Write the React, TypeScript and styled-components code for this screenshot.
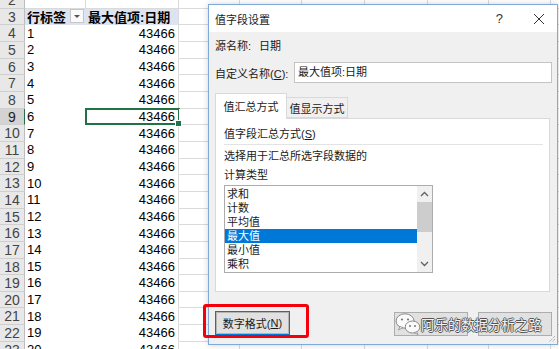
import React from "react";
import styled, { createGlobalStyle } from "styled-components";

const GlobalStyle = createGlobalStyle`
  html, body {
    margin: 0;
    padding: 0;
    background: #fff;
  }
  body {
    font-family: "Liberation Sans", "Noto Sans CJK SC", sans-serif;
  }
  * {
    box-sizing: border-box;
  }
`;

const ROW_H = 50 / 3;
const EXTRA_COLS = [61, 62, 63, 63, 61, 62, 62];
const GRID = "#dadada";
const UI_FONT = `"Liberation Sans", "Noto Sans CJK SC", sans-serif`;

const Page = styled.div`
  position: relative;
  width: 559px;
  height: 349px;
  overflow: hidden;
`;

const Sheet = styled.div`
  margin-top: -8px;
  display: flex;
  flex-direction: column;
`;

const Row = styled.div`
  display: flex;
  height: ${ROW_H}px;
  flex: none;
`;

const RowHead = styled.div<{ $active?: boolean }>`
  width: 25px;
  flex: none;
  background: ${(p) => (p.$active ? "#d3d3d3" : "#e8e8e8")};
  border-right: 1px solid ${(p) => (p.$active ? "#217346" : "#bdbdbd")};
  border-bottom: 1px solid #cfcfcf;
  color: ${(p) => (p.$active ? "#1e1e1e" : "#444")};
  font-size: 14px;
  line-height: ${ROW_H}px;
  text-align: center;
`;

const Cell = styled.div<{
  $w: number;
  $right?: boolean;
  $bold?: boolean;
  $bg?: string;
  $gridRight?: boolean;
  $gridBottom?: boolean;
  $selected?: boolean;
}>`
  position: relative;
  width: ${(p) => p.$w}px;
  flex: none;
  display: flex;
  align-items: center;
  justify-content: ${(p) => (p.$right ? "flex-end" : "space-between")};
  padding: 0 3px 0 2px;
  background: ${(p) => p.$bg || "#fff"};
  border-right: 1px solid ${(p) => (p.$gridRight ? GRID : "transparent")};
  border-bottom: 1px solid ${(p) => (p.$gridBottom ? GRID : "transparent")};
  font-size: 13px;
  font-weight: ${(p) => (p.$bold ? 700 : 400)};
  color: #000;
  white-space: nowrap;
  ${(p) =>
    p.$selected &&
    `
    &::after {
      content: "";
      position: absolute;
      left: -1px;
      top: -1px;
      right: -2px;
      bottom: -1px;
      border: 2px solid #217346;
    }
    &::before {
      content: "";
      position: absolute;
      right: -4px;
      bottom: -3px;
      width: 5px;
      height: 5px;
      background: #217346;
      border: 1px solid #fff;
      z-index: 1;
    }
  `}
`;

const FilterButton = styled.span`
  width: 14px;
  height: 14px;
  margin-right: -2px;
  border: 1px solid #c6c6c6;
  background: #fafafa;
  display: flex;
  align-items: center;
  justify-content: center;
  &::after {
    content: "";
    border-left: 3px solid transparent;
    border-right: 3px solid transparent;
    border-top: 3px solid #555;
  }
`;

/* ---------- dialog ---------- */

const Dialog = styled.div`
  position: absolute;
  left: 208px;
  top: 4px;
  width: 350px;
  height: 341px;
  background: #f0f0f0;
  border: 1px solid #7fa9d8;
  box-shadow: 0 0 6px rgba(0, 0, 0, 0.18);
  display: flex;
  flex-direction: column;
  font-family: ${UI_FONT};
  font-size: 11px;
  color: #1a1a1a;
`;

const TitleBar = styled.div`
  height: 27px;
  flex: none;
  background: #fff;
  display: flex;
  align-items: center;
  padding: 0 12px 0 6px;
  font-size: 11px;
`;

const Title = styled.span`
  flex: 1;
`;

const HelpGlyph = styled.span`
  font-size: 13px;
  color: #333;
  margin-right: 30px;
`;

const Body = styled.div`
  flex: 1;
  display: flex;
  flex-direction: column;
  padding: 7px 5px 0 6px;
`;

const InfoLine = styled.div`
  display: flex;
  height: 14px;
  line-height: 14px;
`;

const Label = styled.span<{ $w: number }>`
  width: ${(p) => p.$w}px;
  flex: none;
`;

const FieldRow = styled.div`
  display: flex;
  align-items: center;
  margin-top: 9px;
  height: 21px;
`;

const TextInput = styled.div`
  flex: 1;
  height: 21px;
  background: #fff;
  border: 1px solid #c4c4c4;
  padding: 0 3px;
  line-height: 19px;
`;

const TabStrip = styled.div`
  display: flex;
  align-items: flex-end;
  margin-top: 10px;
  height: 25px;
  margin-right: 2px;
  position: relative;
  z-index: 1;
`;

const Tab = styled.div<{ $active?: boolean; $w: number }>`
  width: ${(p) => p.$w}px;
  height: ${(p) => (p.$active ? 26 : 21)}px;
  margin-bottom: ${(p) => (p.$active ? -1 : 0)}px;
  background: ${(p) => (p.$active ? "#fff" : "#f0f0f0")};
  border: 1px solid #d9d9d9;
  border-bottom: ${(p) => (p.$active ? "none" : "1px solid #d9d9d9")};
  border-left: ${(p) => (p.$active ? "1px solid #d9d9d9" : "none")};
  display: flex;
  align-items: center;
  justify-content: center;
  padding-bottom: ${(p) => (p.$active ? 1 : 0)}px;
`;

const Panel = styled.div`
  height: 174px;
  margin-right: 2px;
  background: #fff;
  border: 1px solid #d9d9d9;
  padding: 8px 6px 0 8px;
  display: flex;
  flex-direction: column;
`;

const SectionTitle = styled.div`
  height: 14px;
  line-height: 14px;
`;

const Separator = styled.div`
  height: 1px;
  background: #e3e3e3;
  margin-top: 3px;
`;

const Desc = styled.div`
  margin-top: 2px;
  line-height: 19px;
`;

const ListBox = styled.div`
  width: 209px;
  height: 88px;
  border: 1px solid #acacac;
  display: flex;
  background: #fff;
`;

const Items = styled.div`
  flex: 1;
  padding-top: 1px;
  display: flex;
  flex-direction: column;
`;

const Item = styled.div<{ $selected?: boolean }>`
  height: 14px;
  line-height: 14px;
  padding-left: 2px;
  background: ${(p) => (p.$selected ? "#0078d7" : "transparent")};
  color: ${(p) => (p.$selected ? "#fff" : "#1a1a1a")};
`;

const ScrollBar = styled.div`
  width: 15px;
  flex: none;
  background: #f0f0f0;
  display: flex;
  flex-direction: column;
  align-items: center;
`;

const ScrollArrow = styled.div`
  height: 16px;
  width: 15px;
  flex: none;
  display: flex;
  align-items: center;
  justify-content: center;
`;

const Thumb = styled.div`
  width: 15px;
  height: 30px;
  background: #cdcdcd;
`;

const Track = styled.div`
  flex: 1;
`;

const Footer = styled.div`
  display: flex;
  margin-top: 19px;
  height: 24px;
  gap: 10px;
`;

const Button = styled.div<{ $focused?: boolean }>`
  width: ${(p) => (p.$focused ? 75 : 74)}px;
  height: 24px;
  background: #e1e1e1;
  border: 1px solid ${(p) => (p.$focused ? "#0078d7" : "#adadad")};
  box-shadow: ${(p) => (p.$focused ? "inset 0 0 0 1px #b4b4b4" : "none")};
  display: flex;
  align-items: center;
  justify-content: center;
  margin-top: ${(p) => (p.$focused ? 0 : 1)}px;
`;

const Spacer = styled.div`
  flex: 1;
`;

const Grip = styled.svg`
  position: absolute;
  right: 1px;
  bottom: 1px;
`;

/* ---------- overlays ---------- */

const RedMark = styled.div`
  position: absolute;
  left: 203px;
  top: 304px;
  width: 106px;
  height: 34px;
  border: 3px solid #f5000a;
  border-radius: 3px;
`;

const Watermark = styled.div`
  position: absolute;
  left: 395px;
  top: 313px;
  display: flex;
  align-items: center;
  font-family: "Noto Sans CJK SC", sans-serif;
  font-size: 13.5px;
  color: #f2f2f2;
  text-shadow: 1px 0 0 #555, -1px 0 0 #555, 0 1px 0 #555, 0 -1px 0 #555;
  letter-spacing: -0.1px;
`;

const WeChat = () => (
  <svg width="26" height="22" viewBox="0 0 26 22">
    <ellipse cx="10" cy="8" rx="9" ry="7.2" fill="#fafafa" stroke="#8a8a8a" strokeWidth="1" />
    <path d="M5 13.5 L3.5 17 L8 14.6 Z" fill="#fafafa" stroke="#8a8a8a" strokeWidth="0.8" />
    <circle cx="7" cy="6.5" r="1.1" fill="#777" />
    <circle cx="13" cy="6.5" r="1.1" fill="#777" />
    <ellipse cx="17.5" cy="14" rx="7.3" ry="6" fill="#fafafa" stroke="#8a8a8a" strokeWidth="1" />
    <path d="M21.5 18.8 L23 21.5 L19 19.7 Z" fill="#fafafa" stroke="#8a8a8a" strokeWidth="0.8" />
    <circle cx="15" cy="13" r="1" fill="#777" />
    <circle cx="20" cy="13" r="1" fill="#777" />
  </svg>
);

const Chevron = ({ up }: { up?: boolean }) => (
  <svg width="9" height="6" viewBox="0 0 9 6">
    <path
      d={up ? "M1 5 L4.5 1.5 L8 5" : "M1 1 L4.5 4.5 L8 1"}
      fill="none"
      stroke="#606060"
      strokeWidth="1.3"
    />
  </svg>
);

const CloseIcon = () => (
  <svg width="12" height="12" viewBox="0 0 12 12">
    <path d="M1 1 L11 11 M11 1 L1 11" stroke="#333" strokeWidth="1" />
  </svg>
);

const methods = ["求和", "计数", "平均值", "最大值", "最小值", "乘积"];

export default function App() {
  const rows = Array.from({ length: 22 }, (_, i) => i + 2);

  const extras = (rowNo: number) =>
    EXTRA_COLS.map((w, i) => <Cell key={`${rowNo}-${i}`} $w={w} $gridRight $gridBottom />);

  return (
    <>
      <GlobalStyle />
      <Page>
        <Sheet>
          {rows.map((r) => {
            if (r === 2) {
              return (
                <Row key={r}>
                  <RowHead>{r}</RowHead>
                  <Cell $w={61} $gridRight $gridBottom />
                  <Cell $w={93} $gridRight $gridBottom />
                  {extras(r)}
                </Row>
              );
            }
            if (r === 3) {
              return (
                <Row key={r}>
                  <RowHead>{r}</RowHead>
                  <Cell $w={61} $bold $bg="#dce4f2">
                    行标签
                    <FilterButton />
                  </Cell>
                  <Cell $w={93} $bold $bg="#dce4f2" $gridRight>
                    最大值项:日期
                  </Cell>
                  {extras(r)}
                </Row>
              );
            }
            return (
              <Row key={r}>
                <RowHead $active={r === 9}>{r}</RowHead>
                <Cell $w={61}>{r - 3}</Cell>
                <Cell $w={93} $right $gridRight $selected={r === 9}>
                  43466
                </Cell>
                {extras(r)}
              </Row>
            );
          })}
        </Sheet>

        <Dialog>
          <TitleBar>
            <Title>值字段设置</Title>
            <HelpGlyph>?</HelpGlyph>
            <CloseIcon />
          </TitleBar>
          <Body>
            <InfoLine>
              <Label $w={44}>源名称:</Label>
              日期
            </InfoLine>
            <FieldRow>
              <Label $w={79}>
                自定义名称(<u>C</u>):
              </Label>
              <TextInput>最大值项:日期</TextInput>
            </FieldRow>
            <TabStrip>
              <Tab $active $w={72}>值汇总方式</Tab>
              <Tab $w={61}>值显示方式</Tab>
            </TabStrip>
            <Panel>
              <SectionTitle>
                值字段汇总方式(<u>S</u>)
              </SectionTitle>
              <Separator />
              <Desc>
                选择用于汇总所选字段数据的
                <br />
                计算类型
              </Desc>
              <ListBox>
                <Items>
                  {methods.map((m) => (
                    <Item key={m} $selected={m === "最大值"}>
                      {m}
                    </Item>
                  ))}
                </Items>
                <ScrollBar>
                  <ScrollArrow>
                    <Chevron up />
                  </ScrollArrow>
                  <Thumb />
                  <Track />
                  <ScrollArrow>
                    <Chevron />
                  </ScrollArrow>
                </ScrollBar>
              </ListBox>
            </Panel>
            <Footer>
              <Button $focused>
                数字格式(<u>N</u>)
              </Button>
              <Spacer />
              <Button />
              <Button />
            </Footer>
          </Body>
          <Grip width="8" height="8" viewBox="0 0 8 8">
            <path d="M7 1 L1 7 M7 4 L4 7" stroke="#9a9a9a" strokeWidth="1" strokeDasharray="1 1" />
          </Grip>
        </Dialog>

        <RedMark />
        <Watermark>
          <WeChat />
          阿乐的数据分析之路
        </Watermark>
      </Page>
    </>
  );
}
